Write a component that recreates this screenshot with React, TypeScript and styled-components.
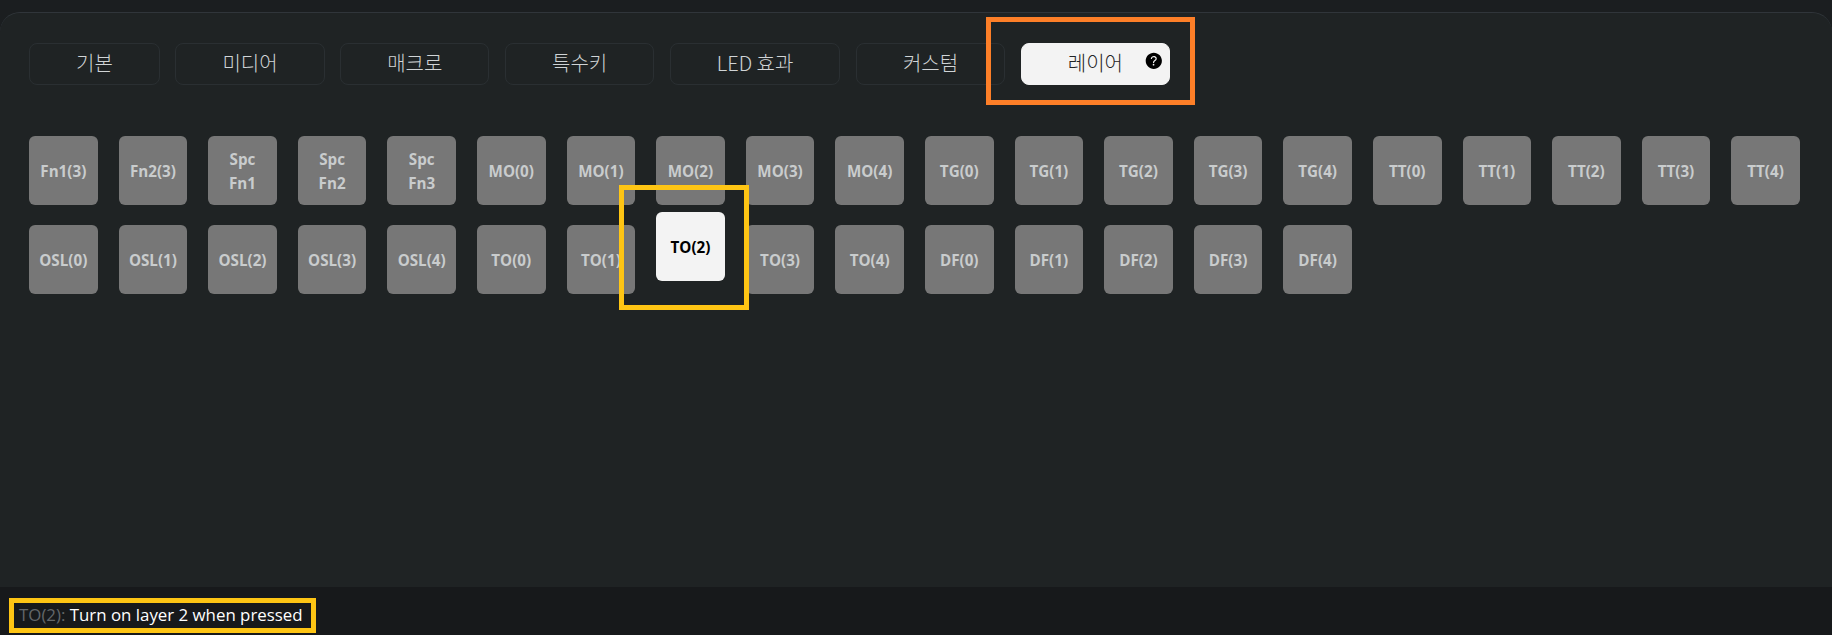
import React from "react";
import styled, { createGlobalStyle } from "styled-components";
import { IoHelpCircle } from "react-icons/io5";

const GlobalStyle = createGlobalStyle`
  html, body { margin: 0; padding: 0; background: #1b1e20; }
  * { box-sizing: border-box; }
`;

const Page = styled.div`
  height: 635px;
  overflow: hidden;
  display: flex;
  flex-direction: column;
  padding-top: 12px;
  font-family: "Open Sans", "Noto Sans", "Noto Sans CJK KR", sans-serif;
`;

const Panel = styled.main`
  flex: 1;
  background: #1f2324;
  border-top: 1px solid #30353a;
  border-radius: 20px 20px 0 0;
  padding: 30px 29px 0;
`;

const TabRow = styled.nav`
  display: flex;
  gap: 15.6px;
  margin-bottom: 51px;
`;

const Tab = styled.div<{ $active?: boolean }>`
  position: relative;
  height: 41.5px;
  padding: 0 46px 2px;
  display: flex;
  align-items: center;
  font-family: "Noto Sans CJK KR", sans-serif;
  font-weight: 300;
  font-size: 20px;
  border-radius: 8px;
  border: 1px solid ${(p) => (p.$active ? "#f3f3f3" : "#2a2f32")};
  background: ${(p) => (p.$active ? "#f3f3f3" : "transparent")};
  color: ${(p) => (p.$active ? "#1f2325" : "#d0d4d6")};
`;

const HelpIcon = styled(IoHelpCircle)`
  position: absolute;
  top: 5.5px;
  right: 4.5px;
  width: 21.6px;
  height: 21.6px;
  color: #000;
`;

const KeyGrid = styled.div`
  display: grid;
  grid-template-columns: repeat(20, 68.6px);
  column-gap: 21px;
  row-gap: 20px;
`;

const Key = styled.div<{ $selected?: boolean }>`
  position: relative;
  height: 69px;
  padding-top: 1px;
  display: flex;
  align-items: center;
  justify-content: center;
  text-align: center;
  white-space: pre-line;
  font-weight: 700;
  font-size: 15.2px;
  line-height: 24px;
  border-radius: 6px;
  background: ${(p) => (p.$selected ? "#f3f3f3" : "#777777")};
  color: ${(p) => (p.$selected ? "#000" : "#c9cccd")};
  transform: ${(p) => (p.$selected ? "translateY(-13px)" : "none")};
  ${(p) => (p.$selected ? "z-index: 2;" : "")}
`;

const Highlight = styled.span<{ $color: string; $t: number; $r: number; $b: number; $l: number }>`
  position: absolute;
  top: ${(p) => p.$t}px;
  right: ${(p) => p.$r}px;
  bottom: ${(p) => p.$b}px;
  left: ${(p) => p.$l}px;
  border: 5px solid ${(p) => p.$color};
  pointer-events: none;
`;

const StatusBar = styled.footer`
  height: 48px;
  flex: none;
  background: #17191b;
  padding: 15px 0 0 19px;
`;

const StatusText = styled.span`
  position: relative;
  display: inline-block;
  font-size: 16.85px;
  line-height: 26px;
  color: #fff;
`;

const StatusCode = styled.span`
  color: #63676a;
`;

const tabs = ["기본", "미디어", "매크로", "특수키", "LED 효과", "커스텀"];

const keys = [
  "Fn1(3)", "Fn2(3)", "Spc\nFn1", "Spc\nFn2", "Spc\nFn3",
  "MO(0)", "MO(1)", "MO(2)", "MO(3)", "MO(4)",
  "TG(0)", "TG(1)", "TG(2)", "TG(3)", "TG(4)",
  "TT(0)", "TT(1)", "TT(2)", "TT(3)", "TT(4)",
  "OSL(0)", "OSL(1)", "OSL(2)", "OSL(3)", "OSL(4)",
  "TO(0)", "TO(1)", "TO(2)", "TO(3)", "TO(4)",
  "DF(0)", "DF(1)", "DF(2)", "DF(3)", "DF(4)",
];

export default function App() {
  return (
    <Page>
      <GlobalStyle />
      <Panel>
        <TabRow>
          {tabs.map((t) => (
            <Tab key={t}>{t}</Tab>
          ))}
          <Tab $active>
            레이어
            <HelpIcon />
            <Highlight $color="#fd7f28" $t={-27} $r={-26} $b={-21} $l={-36} />
          </Tab>
        </TabRow>
        <KeyGrid>
          {keys.map((k) => (
            <Key key={k} $selected={k === "TO(2)"}>
              {k}
              {k === "TO(2)" && (
                <Highlight $color="#fec514" $t={-27} $r={-24} $b={-29} $l={-37} />
              )}
            </Key>
          ))}
        </KeyGrid>
      </Panel>
      <StatusBar>
        <StatusText>
          <StatusCode>TO(2):</StatusCode> Turn on layer 2 when pressed
          <Highlight $color="#fec514" $t={-4} $r={-13} $b={-5} $l={-10} />
        </StatusText>
      </StatusBar>
    </Page>
  );
}
